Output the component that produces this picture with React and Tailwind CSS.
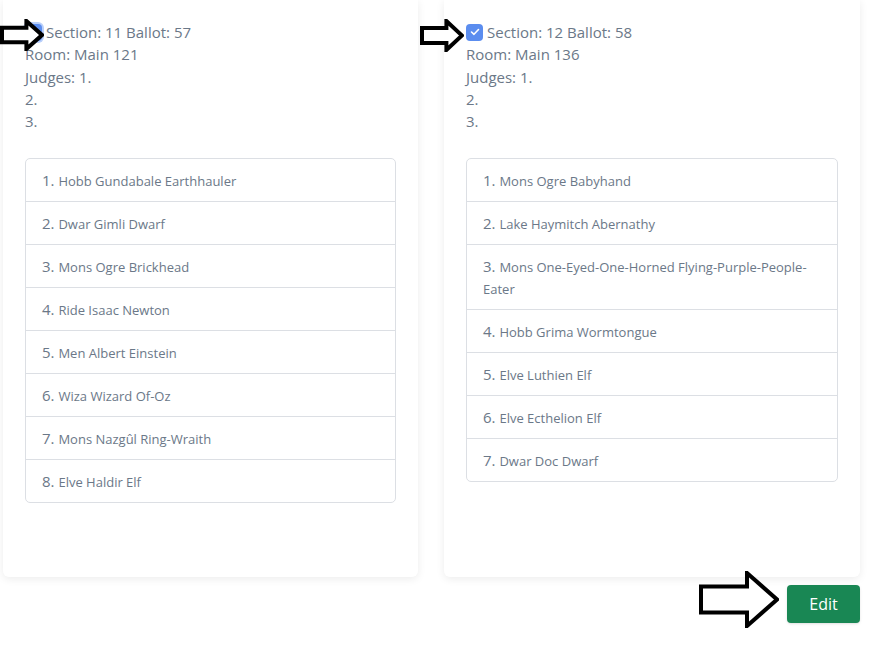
import React from "react";

const ballots = [
  {
    section: 11,
    ballot: 57,
    room: "Main 121",
    focused: true,
    entries: [
      "Hobb Gundabale Earthhauler",
      "Dwar Gimli Dwarf",
      "Mons Ogre Brickhead",
      "Ride Isaac Newton",
      "Men Albert Einstein",
      "Wiza Wizard Of-Oz",
      "Mons Nazgûl Ring-Wraith",
      "Elve Haldir Elf",
    ],
  },
  {
    section: 12,
    ballot: 58,
    room: "Main 136",
    focused: false,
    entries: [
      "Mons Ogre Babyhand",
      "Lake Haymitch Abernathy",
      "Mons One-Eyed-One-Horned Flying-Purple-People-Eater",
      "Hobb Grima Wormtongue",
      "Elve Luthien Elf",
      "Elve Ecthelion Elf",
      "Dwar Doc Dwarf",
    ],
  },
];

// hand-drawn outline arrow used as an annotation on the screenshot
function Arrow({ className, w, h }) {
  const sy1 = h * 0.27;
  const sy2 = h * 0.73;
  const neck = w * 0.6;
  return (
    <svg
      className={className}
      width={w}
      height={h}
      viewBox={`0 0 ${w} ${h}`}
    >
      <path
        d={`M2 ${sy1} L${neck} ${sy1} L${neck} 2 L${w - 2} ${h / 2} L${neck} ${h - 2} L${neck} ${sy2} L2 ${sy2} Z`}
        fill="white"
        stroke="black"
        strokeWidth="4"
        strokeLinejoin="miter"
      />
    </svg>
  );
}

function Checkbox({ focused }) {
  return (
    <span
      className={`inline-flex h-[17px] w-[17px] items-center justify-center rounded-[4px] bg-[#5b8def] mr-[4px] ${
        focused ? "ring-2 ring-[#b9cffa]" : ""
      }`}
    >
      <svg width="10" height="8" viewBox="0 0 10 8">
        <path
          d="M1.5 4 L4 6.3 L8.5 1.5"
          fill="none"
          stroke="white"
          strokeWidth="1.6"
          strokeLinecap="round"
          strokeLinejoin="round"
        />
      </svg>
    </span>
  );
}

function BallotCard({ data, width }) {
  return (
    <div
      className={`${width} h-[577px] bg-white rounded-b-md shadow-[0_2px_8px_rgba(0,0,0,0.08)] px-[22px] pt-[21px]`}
    >
      <div className="text-[15px] leading-[22.3px] text-[#6b7888]">
        <div className="flex items-center">
          <Checkbox focused={data.focused} />
          <span>
            Section: {data.section} Ballot: {data.ballot}
          </span>
        </div>
        <div>Room: {data.room}</div>
        <div>Judges: 1.</div>
        <div>2.</div>
        <div>3.</div>
      </div>
      <ul className="mt-[26px] border border-[#dcdfe4] rounded-[5px]">
        {data.entries.map((name, i) => (
          <li
            key={name}
            className={`px-4 pt-[11px] pb-[9px] leading-[21px] text-[#6b7888] ${
              i > 0 ? "border-t border-[#dcdfe4]" : ""
            }`}
          >
            <span className="text-[15px]">{i + 1}. </span>
            <span className="text-[13px]">{name}</span>
          </li>
        ))}
      </ul>
    </div>
  );
}

export default function App() {
  return (
    <div
      className="relative w-[883px] h-[653px] bg-white overflow-hidden"
      style={{ fontFamily: '"Open Sans", "Noto Sans", sans-serif' }}
    >
      <div className="flex gap-[26px] pl-[3px]">
        <BallotCard data={ballots[0]} width="w-[415px]" />
        <BallotCard data={ballots[1]} width="w-[416px]" />
      </div>
      <div className="flex justify-end pr-[23px] mt-[8px]">
        <button
          type="button"
          className="h-[38px] w-[73px] rounded-[4px] bg-[#198754] text-white text-[16px] shadow-sm"
        >
          Edit
        </button>
      </div>

      <Arrow className="absolute left-0 top-[19px]" w={44} h={32} />
      <Arrow className="absolute left-[420px] top-[19px]" w={44} h={33} />
      <Arrow className="absolute left-[699px] top-[571px]" w={80} h={57} />
    </div>
  );
}
